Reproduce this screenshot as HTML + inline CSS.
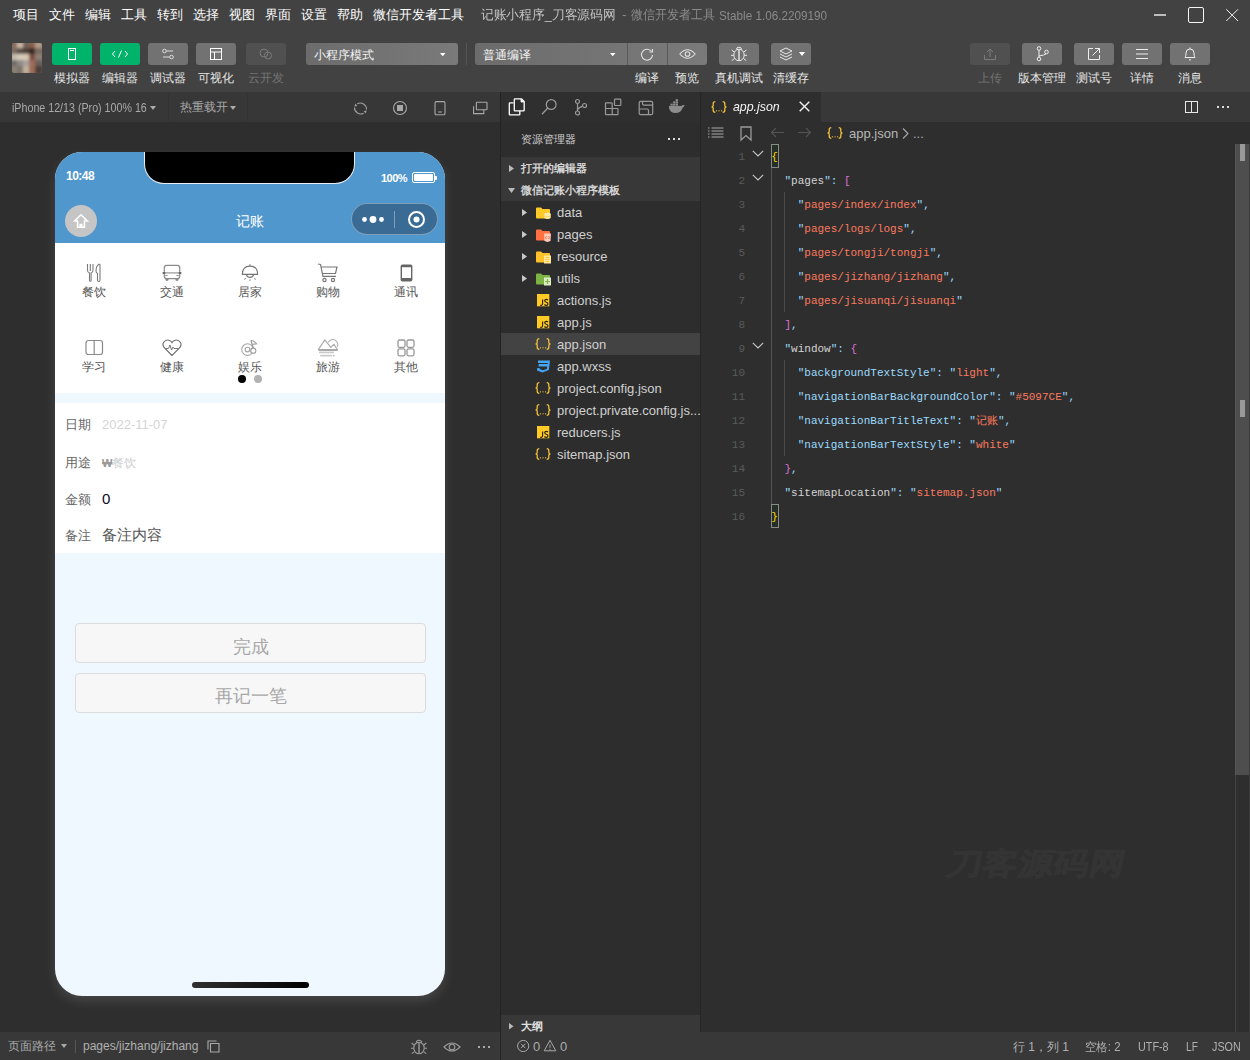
<!DOCTYPE html>
<html><head><meta charset="utf-8">
<style>
*{margin:0;padding:0;box-sizing:border-box}
html,body{width:1250px;height:1060px;overflow:hidden;background:#2e2e2e;font-family:"Liberation Sans",sans-serif}
.a{position:absolute}
.t{position:absolute;white-space:nowrap;line-height:1}
#top{left:0;top:0;width:1250px;height:92px;background:#424242}
.menu{top:8px;font-size:13px;color:#fff;margin-left:0.5px}
.btn{top:43px;width:40px;height:22px;border-radius:3px;background:#727272}
.btn.g{background:#00b26a}
.btn.d{background:#505050}
.lbl{top:72px;font-size:12px;color:#e6e6e6;text-align:center;width:60px}
svg{position:absolute;overflow:visible}
.gl{font-size:12px;color:#555;width:78px;text-align:center}
.tr{font-size:13px;color:#d0d0d0}
.ln{font-family:"Liberation Mono",monospace;font-size:11px;color:#5a5a5a;width:45px;left:700px;text-align:right}
.code{font-family:"Liberation Mono",monospace;font-size:11px}
.fl{font-size:13px;color:#666}
</style></head><body>
<div id="top" class="a"></div>
<!-- menu -->
<div class="t menu" style="left:12px">项目</div>
<div class="t menu" style="left:48px">文件</div>
<div class="t menu" style="left:84px">编辑</div>
<div class="t menu" style="left:120px">工具</div>
<div class="t menu" style="left:156px">转到</div>
<div class="t menu" style="left:192px">选择</div>
<div class="t menu" style="left:228px">视图</div>
<div class="t menu" style="left:264px">界面</div>
<div class="t menu" style="left:300px">设置</div>
<div class="t menu" style="left:336px">帮助</div>
<div class="t menu" style="left:372px">微信开发者工具</div>
<div class="t" style="left:481px;top:8px;font-size:13px;color:#c4c4c4;transform:scaleX(0.98);transform-origin:0 0">记账小程序_刀客源码网</div>
<div class="t" style="left:622px;top:8px;font-size:13px;color:#8a8a8a">-</div>
<div class="t" style="left:631px;top:8px;font-size:13px;color:#8a8a8a;transform:scaleX(0.925);transform-origin:0 0">微信开发者工具</div>
<div class="t" style="left:719px;top:9px;font-size:13px;color:#8a8a8a;transform:scaleX(0.9);transform-origin:0 0" id="stb">Stable 1.06.2209190</div>

<!-- toolbar -->
<svg style="left:12px;top:43px" width="30" height="30"><defs><filter id="bl" x="-10%" y="-10%" width="120%" height="120%"><feGaussianBlur stdDeviation="1.6"/></filter><clipPath id="cp"><rect width="30" height="30" rx="2"/></clipPath></defs><g clip-path="url(#cp)"><rect width="30" height="30" fill="#7d6e64"/><g filter="url(#bl)"><rect x="-1" y="-1" width="8" height="8" fill="#8a6d5e"/><rect x="5" y="-1" width="8" height="8" fill="#c9b8a5"/><rect x="11" y="-1" width="8" height="8" fill="#6e6158"/><rect x="17" y="-1" width="8" height="8" fill="#8a5f4c"/><rect x="23" y="-1" width="8" height="8" fill="#b29a88"/><rect x="-1" y="5" width="8" height="8" fill="#7a6a60"/><rect x="5" y="5" width="8" height="8" fill="#584d45"/><rect x="11" y="5" width="8" height="8" fill="#4d4038"/><rect x="17" y="5" width="8" height="8" fill="#3a2520"/><rect x="23" y="5" width="8" height="8" fill="#7a6a60"/><rect x="-1" y="11" width="8" height="8" fill="#c6bcae"/><rect x="5" y="11" width="8" height="8" fill="#d6ccbc"/><rect x="11" y="11" width="8" height="8" fill="#d8cab4"/><rect x="17" y="11" width="8" height="8" fill="#7a4c40"/><rect x="23" y="11" width="8" height="8" fill="#8e7f74"/><rect x="-1" y="17" width="8" height="8" fill="#6f6a68"/><rect x="5" y="17" width="8" height="8" fill="#908886"/><rect x="11" y="17" width="8" height="8" fill="#a8a09b"/><rect x="17" y="17" width="8" height="8" fill="#a26a5a"/><rect x="23" y="17" width="8" height="8" fill="#6a5e58"/><rect x="-1" y="23" width="8" height="8" fill="#8b8070"/><rect x="5" y="23" width="8" height="8" fill="#7a746e"/><rect x="11" y="23" width="8" height="8" fill="#c0b29a"/><rect x="17" y="23" width="8" height="8" fill="#9e6a5a"/><rect x="23" y="23" width="8" height="8" fill="#4a3e38"/></g></g></svg>
<div class="a btn g" style="left:52px"></div>
<svg style="left:68px;top:48px" width="8" height="12"><rect x="0.5" y="0.5" width="7" height="11" fill="none" stroke="#fff" stroke-width="1"/><line x1="2" y1="2.5" x2="6" y2="2.5" stroke="#fff"/></svg>
<div class="a btn g" style="left:100px"></div>
<svg style="left:111px;top:48px" width="18" height="12"><path d="M4 3 L1.5 6 L4 9 M14 3 L16.5 6 L14 9 M10.5 2.5 L7.5 9.5" fill="none" stroke="#fff" stroke-width="1"/></svg>
<div class="a btn" style="left:148px"></div>
<svg style="left:162px;top:48px" width="12" height="12"><circle cx="2.5" cy="3" r="1.8" fill="none" stroke="#ddd"/><line x1="4.5" y1="3" x2="11" y2="3" stroke="#ddd"/><circle cx="9.5" cy="9" r="1.8" fill="none" stroke="#ddd"/><line x1="1" y1="9" x2="7.5" y2="9" stroke="#ddd"/></svg>
<div class="a btn" style="left:196px"></div>
<svg style="left:209px;top:47px" width="14" height="14"><rect x="1.5" y="1.5" width="11" height="11" fill="none" stroke="#fff"/><line x1="1.5" y1="5" x2="12.5" y2="5" stroke="#fff"/><line x1="5.5" y1="5" x2="5.5" y2="12.5" stroke="#fff"/></svg>
<div class="a btn d" style="left:246px"></div>
<svg style="left:258px;top:48px" width="16" height="12"><circle cx="6" cy="5" r="4" fill="none" stroke="#7a7a7a"/><circle cx="10" cy="7.5" r="3.5" fill="none" stroke="#7a7a7a"/></svg>
<div class="t lbl" style="left:42px">模拟器</div>
<div class="t lbl" style="left:90px">编辑器</div>
<div class="t lbl" style="left:138px">调试器</div>
<div class="t lbl" style="left:186px">可视化</div>
<div class="t lbl" style="left:236px;color:#747474">云开发</div>
<div class="a" style="left:306px;top:43px;width:152px;height:22px;border-radius:3px;background:linear-gradient(90deg,#6c6c6c,#7a7a7a)"></div>
<div class="t" style="left:314px;top:49px;font-size:12px;color:#f4f4f4">小程序模式</div>
<svg style="left:440px;top:53px" width="6" height="4"><path d="M0 0 L5.5 0 L2.75 3.2 Z" fill="#fff"/></svg>
<div class="a" style="left:466px;top:43px;width:1px;height:22px;background:#555"></div>
<div class="a" style="left:475px;top:43px;width:232px;height:22px;border-radius:3px;background:linear-gradient(90deg,#6c6c6c,#7a7a7a)"></div>
<div class="a" style="left:627px;top:43px;width:1px;height:22px;background:#5a5a5a"></div>
<div class="a" style="left:667px;top:43px;width:1px;height:22px;background:#5a5a5a"></div>
<div class="t" style="left:483px;top:49px;font-size:12px;color:#f4f4f4">普通编译</div>
<svg style="left:610px;top:53px" width="6" height="4"><path d="M0 0 L5.5 0 L2.75 3.2 Z" fill="#fff"/></svg>
<svg style="left:640px;top:47px" width="14" height="14"><path d="M11.5 4.5 A5.5 5.5 0 1 0 12.5 8" fill="none" stroke="#e0e0e0" stroke-width="1.1"/><path d="M9.5 5 L12.5 5 L12.5 2" fill="none" stroke="#e0e0e0" stroke-width="1.1"/></svg>
<svg style="left:679px;top:48px" width="17" height="12"><path d="M0.8 6 Q8.5 -2.5 16.2 6 Q8.5 14.5 0.8 6 Z" fill="none" stroke="#e0e0e0" stroke-width="1.1"/><circle cx="8.5" cy="6" r="2.3" fill="none" stroke="#e0e0e0" stroke-width="1.1"/></svg>
<div class="a btn" style="left:719px"></div>
<svg style="left:730px;top:46px" width="18" height="16"><ellipse cx="9" cy="9" rx="5.2" ry="5.8" fill="none" stroke="#ececec" stroke-width="1.0"/><path d="M6.3 3.6 Q6.5 1.2 9 1.2 Q11.5 1.2 11.7 3.6" fill="none" stroke="#ececec" stroke-width="1.0"/><line x1="9" y1="3.4" x2="9" y2="14.6" stroke="#ececec" stroke-width="1.4"/><path d="M4.2 6 L1.6 4 M3.8 9.3 L1 9.3 M4.4 12.6 L1.8 14.6 M13.8 6 L16.4 4 M14.2 9.3 L17 9.3 M13.6 12.6 L16.2 14.6" stroke="#ececec" stroke-width="1.0"/></svg>
<div class="a btn" style="left:771px"></div>
<svg style="left:779px;top:47px" width="14" height="14"><path d="M7 1 L13 4 L7 7 L1 4 Z" fill="none" stroke="#e8e8e8"/><path d="M1 7 L7 10 L13 7 M1 10 L7 13 L13 10" fill="none" stroke="#e8e8e8"/></svg>
<svg style="left:799px;top:52px" width="6" height="4"><path d="M0 0 L6 0 L3 4 Z" fill="#fff"/></svg>
<div class="t lbl" style="left:617px">编译</div>
<div class="t lbl" style="left:657px">预览</div>
<div class="t lbl" style="left:709px">真机调试</div>
<div class="t lbl" style="left:761px">清缓存</div>
<!-- right toolbar -->
<div class="a btn d" style="left:970px"></div>
<svg style="left:983px;top:47px" width="14" height="14"><path d="M7 10 L7 2 M4 5 L7 2 L10 5 M1.5 8 L1.5 12.5 L12.5 12.5 L12.5 8" fill="none" stroke="#7a7a7a"/></svg>
<div class="a btn" style="left:1022px"></div>
<svg style="left:1036px;top:46px" width="14" height="16"><circle cx="3" cy="2.5" r="1.8" fill="none" stroke="#eee"/><circle cx="3" cy="13" r="1.8" fill="none" stroke="#eee"/><circle cx="10.5" cy="6" r="1.8" fill="none" stroke="#eee"/><path d="M3 4.3 L3 11.2 M3 10 Q9 9 10 7.8" fill="none" stroke="#eee"/></svg>
<div class="a btn" style="left:1074px"></div>
<svg style="left:1087px;top:47px" width="14" height="14"><path d="M6 1.5 L1.5 1.5 L1.5 12.5 L12.5 12.5 L12.5 8 M8 1.5 L12.5 1.5 L12.5 6 M12.5 1.5 L5.5 8.5" fill="none" stroke="#eee"/></svg>
<div class="a btn" style="left:1122px"></div>
<svg style="left:1135px;top:48px" width="14" height="12"><path d="M1 1.5 H13 M1 6 H13 M1 10.5 H13" stroke="#eee"/></svg>
<div class="a btn" style="left:1170px"></div>
<svg style="left:1183px;top:46px" width="14" height="16"><path d="M2 11.5 L2.5 10.5 Q3 9.5 3 7 Q3 3 7 3 Q11 3 11 7 Q11 9.5 11.5 10.5 L12 11.5 Z M6 13.5 Q7 14.8 8 13.5 M7 1.5 L7 3" fill="none" stroke="#eee"/></svg>
<div class="t lbl" style="left:960px;color:#747474">上传</div>
<div class="t lbl" style="left:1012px">版本管理</div>
<div class="t lbl" style="left:1064px">测试号</div>
<div class="t lbl" style="left:1112px">详情</div>
<div class="t lbl" style="left:1160px">消息</div>
<!-- window controls -->
<div class="a" style="left:1154px;top:14px;width:12px;height:2px;background:#bdbdbd"></div>
<div class="a" style="left:1188px;top:7px;width:16px;height:16px;border:1px solid #f4f4f4;border-radius:2px"></div>
<svg style="left:1226px;top:9px" width="13" height="13"><path d="M0.3 0.3 L12 12 M12 0.3 L0.3 12" stroke="#f0f0f0" stroke-width="1"/></svg>

<!-- panels -->
<div class="a" style="left:0;top:92px;width:500px;height:30px;background:#373737"></div>
<div class="a" style="left:500px;top:92px;width:1px;height:968px;background:#232323"></div>
<div class="a" style="left:501px;top:92px;width:199px;height:940px;background:#2d2d2d"></div>
<div class="a" style="left:700px;top:92px;width:550px;height:30px;background:#383838"></div>
<div class="a" style="left:700px;top:92px;width:1px;height:940px;background:#262626"></div>
<div class="a" style="left:701px;top:92px;width:120px;height:30px;background:#2e2e2e"></div>
<div class="a" style="left:701px;top:122px;width:549px;height:910px;background:#2e2e2e"></div>
<div class="a" style="left:0;top:1032px;width:500px;height:28px;background:#383838"></div>
<div class="a" style="left:501px;top:1032px;width:749px;height:28px;background:#383838"></div>


<!-- sim toolbar -->
<div class="t" style="left:12px;top:102px;font-size:12px;color:#a9a9a9;transform:scaleX(0.89);transform-origin:0 0">iPhone 12/13 (Pro) 100% 16</div>
<svg style="left:150px;top:106px" width="6" height="4"><path d="M0 0 L6 0 L3 4 Z" fill="#aaa"/></svg>
<div class="a" style="left:168px;top:92px;width:1px;height:30px;background:#333"></div>
<div class="t" style="left:180px;top:101px;font-size:12px;color:#a9a9a9">热重载</div><div class="t" style="left:216px;top:101px;font-size:12px;color:#a9a9a9">开</div>
<svg style="left:230px;top:106px" width="6" height="4"><path d="M0 0 L6 0 L3 4 Z" fill="#aaa"/></svg>
<div class="a" style="left:247px;top:92px;width:1px;height:30px;background:#333"></div>
<svg style="left:353px;top:101px" width="15" height="15"><path d="M4.3 2.8 A6.3 6.3 0 0 1 13.5 8.5" fill="none" stroke="#a0a0a0" stroke-width="1.1"/><path d="M10.7 12.2 A6.3 6.3 0 0 1 1.5 6.5" fill="none" stroke="#a0a0a0" stroke-width="1.1"/><path d="M1.3 5.5 L2.5 2.5 L4.3 5" fill="#a0a0a0"/><path d="M13.7 9.5 L12.5 12.5 L10.7 10" fill="#a0a0a0"/></svg>
<svg style="left:393px;top:101px" width="15" height="15"><circle cx="7" cy="7" r="6.5" fill="none" stroke="#a8a8a8" stroke-width="1.1"/><rect x="4" y="4" width="6" height="6" fill="#a8a8a8"/></svg>
<svg style="left:434px;top:101px" width="12" height="15"><rect x="1" y="0.6" width="10" height="13.2" rx="1.3" fill="none" stroke="#a8a8a8" stroke-width="1.1"/><line x1="4.2" y1="11" x2="7.8" y2="11" stroke="#a8a8a8" stroke-width="1.1"/></svg>
<svg style="left:473px;top:101px" width="16" height="14"><rect x="3.4" y="1.2" width="10.6" height="7.6" rx="0.5" fill="none" stroke="#a8a8a8" stroke-width="1.1"/><path d="M0.6 5.3 L0.6 12.6 L10.8 12.6 L10.8 8.8" fill="none" stroke="#a8a8a8" stroke-width="1.1"/></svg>
<!-- phone -->
<div class="a" style="left:55px;top:152px;width:390px;height:844px;border-radius:27px;background:#f0f8ff;overflow:hidden;box-shadow:0 5px 12px rgba(255,255,255,0.12)">
  <div class="a" style="left:0;top:0;width:390px;height:91px;background:#5097ce"></div>
  <div class="a" style="left:89px;top:-1px;width:211px;height:33px;background:#000;border-radius:0 0 20px 20px;border:1px solid #e8eef4;border-top:none"></div>
  <div class="t" style="left:11px;top:18px;font-size:12px;color:#fff;font-weight:bold;letter-spacing:-0.5px">10:48</div>
  <div class="t" style="left:326px;top:21px;font-size:11px;color:#fff;font-weight:bold;letter-spacing:-0.5px">100%</div>
  <div class="a" style="left:357px;top:20px;width:23px;height:11px;border:1px solid #fff;border-radius:2px;padding:1px"><div style="width:100%;height:100%;background:#fff;border-radius:1px"></div></div>
  <div class="a" style="left:380px;top:24px;width:2px;height:4px;background:#fff;border-radius:0 1px 1px 0"></div>
  <div class="a" style="left:10px;top:53px;width:32px;height:32px;border-radius:16px;background:#c5c5c5"></div>
  <svg style="left:18px;top:61px" width="16" height="16"><path d="M8 1.8 L14.3 8 L11.4 8 L11.4 14.3 L8.8 14.3 L8.8 11.5 L7.2 11.5 L7.2 14.3 L4.6 14.3 L4.6 8 L1.7 8 Z" fill="none" stroke="#fff" stroke-width="1.6" stroke-linejoin="miter"/></svg>
  <div class="t" style="left:181px;top:62px;font-size:14px;color:#fff">记账</div>
  <div class="a" style="left:296px;top:51px;width:87px;height:32px;border-radius:16px;background:#3a6b94;border:1px solid rgba(255,255,255,0.35)"></div>
  <div class="a" style="left:339px;top:59px;width:1px;height:17px;background:rgba(255,255,255,0.35)"></div>
  <svg style="left:305px;top:60px" width="30" height="15"><circle cx="4.5" cy="7.5" r="2.4" fill="#fff"/><circle cx="13" cy="7.5" r="3.4" fill="#fff"/><circle cx="21.5" cy="7.5" r="2.4" fill="#fff"/></svg>
  <svg style="left:351px;top:57px" width="20" height="20"><circle cx="10.5" cy="10.5" r="7.5" fill="none" stroke="#fff" stroke-width="2"/><circle cx="10.5" cy="10.5" r="3" fill="#fff"/></svg>
  <div class="a" style="left:0;top:91px;width:390px;height:150px;background:#fff"></div>
  <div class="a" style="left:0;top:251px;width:390px;height:150px;background:#fff"></div>
  <div class="a" style="left:137px;top:830px;width:117px;height:6px;border-radius:3px;background:linear-gradient(90deg,#303030,#000)"></div>
</div>

<!-- grid -->
<div class="a" style="left:55px;top:243px;width:390px;height:150px">
  <div class="t gl" style="left:0px;top:43px">餐饮</div>
  <div class="t gl" style="left:78px;top:43px">交通</div>
  <div class="t gl" style="left:156px;top:43px">居家</div>
  <div class="t gl" style="left:234px;top:43px">购物</div>
  <div class="t gl" style="left:312px;top:43px">通讯</div>
  <div class="t gl" style="left:0px;top:118px">学习</div>
  <div class="t gl" style="left:78px;top:118px">健康</div>
  <div class="t gl" style="left:156px;top:118px">娱乐</div>
  <div class="t gl" style="left:234px;top:118px">旅游</div>
  <div class="t gl" style="left:312px;top:118px">其他</div>
</div>
<!-- icons row1 -->
<svg style="left:86px;top:263px" width="16" height="19"><path d="M1.5 1 L1.5 7 Q1.5 9.5 3.5 10 L3.5 17.5 Q3.5 18.3 4.3 18.3 Q5.1 18.3 5.1 17.5 L5.1 10 Q7 9.5 7 7 L7 1 M4.3 1 L4.3 8" fill="none" stroke="#7a7a7a" stroke-width="1.1"/><path d="M11.5 10.5 L11.5 17.3 Q11.5 18.5 12.8 18.5 Q14 18.5 14 17.3 L14 2 Q14 1 13 1.3 Q10 3 10 8 Q10 9.8 11.5 10.5 Z" fill="none" stroke="#7a7a7a" stroke-width="1.1"/></svg>
<svg style="left:160px;top:260px" width="24" height="24"><rect x="4.3" y="5.3" width="15.4" height="13.3" rx="2.4" fill="none" stroke="#8a8a8a" stroke-width="1.2"/><path d="M4.3 12.9 H19.7" stroke="#aaa" stroke-width="1.5"/><path d="M3.4 13 H4.5 M19.5 13 H20.6" stroke="#666" stroke-width="2" stroke-linecap="round"/><path d="M4.6 15.6 H7.8 M16.2 15.6 H19.4" stroke="#9a9a9a" stroke-width="1"/><path d="M5.2 18.5 Q5.2 21 7 21 Q8.8 21 8.8 18.5 Z M15.2 18.5 Q15.2 21 17 21 Q18.8 21 18.8 18.5 Z" fill="#8a8a8a"/></svg>
<svg style="left:238px;top:260px" width="24" height="24"><path d="M4.4 14.3 Q4.4 6.1 12 6.1 Q19.6 6.1 19.6 14.3 Z" fill="none" stroke="#747474" stroke-width="1.2"/><path d="M12 4.3 V6.1" stroke="#8a8a8a" stroke-width="1.2"/><path d="M8.3 14.6 Q9.2 17.4 12 17.4 Q14.8 17.4 15.7 14.6" fill="none" stroke="#777" stroke-width="1.1"/><path d="M6.4 19.7 L7.7 18.2 M12 19.3 V20.9 M17.6 19.7 L16.3 18.2" stroke="#999" stroke-width="1.1"/></svg>
<svg style="left:317px;top:263px" width="22" height="20"><path d="M1 1 L3.5 1.5 L6 13.3 L19 13.3" fill="none" stroke="#777" stroke-width="1.2"/><path d="M4 4 L20 4 L18.5 10.5 L5.3 10.5" fill="none" stroke="#777" stroke-width="1.2"/><circle cx="7.5" cy="17" r="1.6" fill="none" stroke="#777" stroke-width="1.2"/><circle cx="16" cy="17" r="1.6" fill="none" stroke="#777" stroke-width="1.2"/></svg>
<svg style="left:400px;top:264px" width="13" height="18"><rect x="1.3" y="1.3" width="10.4" height="15.4" rx="1" fill="none" stroke="#666" stroke-width="1.4"/><line x1="1.3" y1="2.5" x2="11.7" y2="2.5" stroke="#666" stroke-width="1.5"/><line x1="1.3" y1="15" x2="11.7" y2="15" stroke="#666" stroke-width="2"/></svg>
<!-- icons row2 -->
<svg style="left:85px;top:339px" width="19" height="18"><rect x="1" y="1.5" width="16.5" height="14" rx="2.5" fill="none" stroke="#8a8a8a" stroke-width="1.2"/><line x1="9.2" y1="1.5" x2="9.2" y2="16" stroke="#8a8a8a" stroke-width="1.2"/></svg>
<svg style="left:162px;top:339px" width="20" height="18"><path d="M10 16.5 L2.5 9 Q0 6 1.5 3.5 Q3.5 0.5 7 1.2 Q9 1.7 10 3.5 Q11 1.7 13 1.2 Q16.5 0.5 18.5 3.5 Q20 6 17.5 9 Z" fill="none" stroke="#6a6a6a" stroke-width="1.1"/><path d="M3.5 9.5 L6.5 9.5 L8 6 L9.5 11 L11 8 L12 9.5 L16 9.5" fill="none" stroke="#6a6a6a" stroke-width="0.9"/></svg>
<svg style="left:238px;top:336px" width="24" height="24"><circle cx="9.5" cy="13.6" r="5.8" fill="none" stroke="#ababab" stroke-width="1.1"/><circle cx="9.5" cy="13.6" r="2.3" fill="none" stroke="#a5a5a5" stroke-width="1.1"/><path d="M15.3 12 L13 4.6" stroke="#9a9a9a" stroke-width="1.2"/><circle cx="15.3" cy="14.7" r="2.6" fill="#fff" stroke="#9a9a9a" stroke-width="1.1"/><path d="M12.6 4.2 Q16.5 4.6 18.6 7.8 L14.3 8.4" fill="none" stroke="#a0a0a0" stroke-width="1.1"/></svg>
<svg style="left:315px;top:336px" width="26" height="24"><path d="M13 6.6 A4.8 4.8 0 0 1 22.4 10.8" fill="none" stroke="#b0b0b0" stroke-width="1.1"/><path d="M3.3 13.6 L9.8 3.9 L15.8 11.4 L18.8 8.4 L22.5 13.6 Z" fill="none" stroke="#aaaaaa" stroke-width="1.1" stroke-linejoin="round"/><path d="M3.5 14.4 H22.5" stroke="#a8a8a8" stroke-width="1.2"/><path d="M4 16.4 H19" stroke="#c8c8c8" stroke-width="1.6"/><path d="M5.8 19.6 H16.5" stroke="#cccccc" stroke-width="1.7" stroke-linecap="round"/><circle cx="18.8" cy="19.6" r="0.9" fill="#c0c0c0"/></svg>
<svg style="left:397px;top:339px" width="19" height="18"><rect x="1" y="1" width="7" height="7.3" rx="1.5" fill="none" stroke="#999" stroke-width="1.3"/><rect x="10" y="1" width="7" height="7.3" rx="1.5" fill="none" stroke="#999" stroke-width="1.3"/><rect x="1" y="9.8" width="7" height="7" rx="1.5" fill="none" stroke="#999" stroke-width="1.3"/><rect x="10" y="9.8" width="7" height="7" rx="1.5" fill="none" stroke="#999" stroke-width="1.3"/></svg>
<div class="a" style="left:238px;top:375px;width:8px;height:8px;border-radius:4px;background:#000"></div>
<div class="a" style="left:254px;top:375px;width:8px;height:8px;border-radius:4px;background:#b2b2b2"></div>
<!-- form -->
<div class="a" style="left:55px;top:403px;width:390px;height:150px;background:#fff"></div>
<div class="t fl" style="left:65px;top:418px">日期</div>
<div class="t" style="left:102px;top:418px;font-size:13px;color:#d4d4d4">2022-11-07</div>
<div class="t fl" style="left:65px;top:456px">用途</div>
<div class="t" style="left:102px;top:457px;font-size:12px;color:#d0d0d0"><span style="font-size:11px;color:#9a9a9a;font-weight:bold">₩</span>餐饮</div>
<div class="t fl" style="left:65px;top:493px">金额</div>
<div class="t" style="left:102px;top:491px;font-size:15px;color:#0a0a1e">0</div>
<div class="t fl" style="left:65px;top:529px">备注</div>
<div class="t" style="left:102px;top:527px;font-size:15px;color:#555">备注内容</div>
<!-- buttons -->
<div class="a" style="left:75px;top:623px;width:351px;height:40px;border:1px solid #dcdcdc;border-radius:4px;background:#f7f7f7"></div>
<div class="t" style="left:75px;top:638px;width:351px;text-align:center;font-size:18px;color:#a8a8a8">完成</div>
<div class="a" style="left:75px;top:673px;width:351px;height:40px;border:1px solid #dcdcdc;border-radius:4px;background:#f7f7f7"></div>
<div class="t" style="left:75px;top:687px;width:351px;text-align:center;font-size:18px;color:#a8a8a8">再记一笔</div>

<!-- explorer -->
<div class="a" style="left:501px;top:92px;width:199px;height:30px;background:#2f2f2f"></div>
<svg style="left:505px;top:96px" width="24" height="22"><path d="M8.5 6.8 L5 6.8 Q4.3 6.8 4.3 7.5 L4.3 18.2 Q4.3 18.8 5 18.8 L14.2 18.8 Q14.8 18.8 14.8 18.2 L14.8 14.8" fill="none" stroke="#fff" stroke-width="1.3"/><path d="M9.3 3.6 Q9.3 2.9 10 2.9 L16.5 2.9 L19.2 5.6 L19.2 14.2 Q19.2 14.8 18.5 14.8 L10 14.8 Q9.3 14.8 9.3 14.2 Z" fill="none" stroke="#fff" stroke-width="1.3"/><path d="M16 3 L16 6 L19 6" fill="#fff" stroke="#fff" stroke-width="0.8"/></svg>
<svg style="left:540px;top:98px" width="18" height="18"><circle cx="11.2" cy="6.5" r="4.9" fill="none" stroke="#9a9a9a" stroke-width="1.2"/><line x1="7.8" y1="10" x2="2" y2="16.3" stroke="#9a9a9a" stroke-width="1.3"/></svg>
<svg style="left:574px;top:99px" width="14" height="17"><circle cx="3.5" cy="2.5" r="2" fill="none" stroke="#9a9a9a" stroke-width="1.2"/><circle cx="3.5" cy="14" r="2" fill="none" stroke="#9a9a9a" stroke-width="1.2"/><circle cx="10.5" cy="6.5" r="2" fill="none" stroke="#9a9a9a" stroke-width="1.2"/><path d="M3.5 4.5 L3.5 12 M3.5 11.5 Q3.8 8.5 8.6 7.3" fill="none" stroke="#9a9a9a" stroke-width="1.2"/></svg>
<svg style="left:604px;top:98px" width="19" height="18"><path d="M2.2 4.8 L7.5 4.8 Q8.2 4.8 8.2 5.5 L8.2 10.5 L13.3 10.5 Q14 10.5 14 11.2 L14 16 Q14 16.6 13.3 16.6 L2.2 16.6 Q1.5 16.6 1.5 16 L1.5 5.5 Q1.5 4.8 2.2 4.8 Z M1.5 10.5 L8.2 10.5 L8.2 16.6" fill="none" stroke="#9a9a9a" stroke-width="1.2"/><rect x="10.5" y="1.2" width="6.3" height="6.3" rx="0.8" fill="none" stroke="#9a9a9a" stroke-width="1.2"/></svg>
<svg style="left:638px;top:100px" width="16" height="16"><rect x="1.2" y="1.4" width="13.5" height="13.3" rx="1.5" fill="none" stroke="#9a9a9a" stroke-width="1.2"/><path d="M4.5 1.4 L4.5 3.8 Q4.5 5.2 6 5.2 L14.7 5.2 M1.2 9 L9 9 Q10.5 9 10.5 10.5 L10.5 14.7" fill="none" stroke="#9a9a9a" stroke-width="1.2"/></svg>
<svg style="left:668px;top:100px" width="18" height="14"><path d="M1 6 L13.5 6 Q14.5 4.5 16.8 5.5 Q15.5 7.5 14.8 7.5 Q13 13 7.5 13 Q2 13 1 8 Z" fill="#8c8c8c"/><rect x="2.5" y="3.7" width="2.3" height="2" fill="#8c8c8c"/><rect x="5.1" y="3.7" width="2.3" height="2" fill="#8c8c8c"/><rect x="7.7" y="3.7" width="2.3" height="2" fill="#8c8c8c"/><rect x="5.1" y="1.4" width="2.3" height="2" fill="#8c8c8c"/><rect x="7.7" y="1.4" width="2.3" height="2" fill="#8c8c8c"/><rect x="7.7" y="-0.8" width="2.3" height="2" fill="#8c8c8c"/></svg>
<div class="t" style="left:521px;top:134px;font-size:11px;color:#cfcfcf">资源管理器</div>
<div class="a" style="left:668px;top:138px;width:2px;height:2px;background:#ddd"></div>
<div class="a" style="left:673px;top:138px;width:2px;height:2px;background:#ddd"></div>
<div class="a" style="left:678px;top:138px;width:2px;height:2px;background:#ddd"></div>
<div class="a" style="left:501px;top:157px;width:199px;height:44px;background:#383838"></div>
<svg style="left:509px;top:165px" width="5" height="7"><path d="M0 0 L5 3.5 L0 7 Z" fill="#bbb"/></svg>
<svg style="left:508px;top:188px" width="7" height="5"><path d="M0 0 L7 0 L3.5 5 Z" fill="#bbb"/></svg>
<div class="t" style="left:521px;top:163px;font-size:11px;color:#d4d4d4;font-weight:bold">打开的编辑器</div>
<div class="t" style="left:521px;top:185px;font-size:11px;color:#d4d4d4;font-weight:bold">微信记账小程序模板</div>
<div class="a" style="left:501px;top:333px;width:199px;height:22px;background:#434343"></div>
<div class="t tr" style="left:557px;top:206px">data</div>
<svg style="left:522px;top:208px" width="5" height="9"><path d="M0 1 L5 4.5 L0 8 Z" fill="#c8c8c8"/></svg>
<div class="t tr" style="left:557px;top:228px">pages</div>
<svg style="left:522px;top:230px" width="5" height="9"><path d="M0 1 L5 4.5 L0 8 Z" fill="#c8c8c8"/></svg>
<div class="t tr" style="left:557px;top:250px">resource</div>
<svg style="left:522px;top:252px" width="5" height="9"><path d="M0 1 L5 4.5 L0 8 Z" fill="#c8c8c8"/></svg>
<div class="t tr" style="left:557px;top:272px">utils</div>
<svg style="left:522px;top:274px" width="5" height="9"><path d="M0 1 L5 4.5 L0 8 Z" fill="#c8c8c8"/></svg>
<div class="t tr" style="left:557px;top:294px">actions.js</div>
<div class="t tr" style="left:557px;top:316px">app.js</div>
<div class="t tr" style="left:557px;top:338px">app.json</div>
<div class="t tr" style="left:557px;top:360px">app.wxss</div>
<div class="t tr" style="left:557px;top:382px">project.config.json</div>
<div class="t tr" style="left:557px;top:404px">project.private.config.js...</div>
<div class="t tr" style="left:557px;top:426px">reducers.js</div>
<div class="t tr" style="left:557px;top:448px">sitemap.json</div>
<svg style="left:536px;top:207px" width="16" height="13"><path d="M0 1.5 Q0 0.5 1 0.5 L5 0.5 L6.5 2 L13 2 Q14 2 14 3 L14 10.5 Q14 11.5 13 11.5 L1 11.5 Q0 11.5 0 10.5 Z" fill="#ffca28"/><ellipse cx="11.5" cy="7" rx="3.2" ry="1.3" fill="#ffe9a8"/><path d="M8.3 7 L8.3 11 Q11.5 13 14.7 11 L14.7 7" fill="#ffe9a8"/><path d="M8.3 9 Q11.5 10.5 14.7 9" stroke="#ffca28" stroke-width="0.6" fill="none"/></svg>
<svg style="left:536px;top:229px" width="16" height="13"><path d="M0 1.5 Q0 0.5 1 0.5 L5 0.5 L6.5 2 L13 2 Q14 2 14 3 L14 10.5 Q14 11.5 13 11.5 L1 11.5 Q0 11.5 0 10.5 Z" fill="#ff7043"/><path d="M8 4.5 L15 4.5 L14.5 12 L11.5 13 L8.5 12 Z" fill="#ffccbc"/><path d="M10.5 7 L9.5 8.5 L10.5 10 M12.5 7 L13.5 8.5 L12.5 10" stroke="#ff5a36" stroke-width="0.8" fill="none"/></svg>
<svg style="left:536px;top:251px" width="16" height="13"><path d="M0 1.5 Q0 0.5 1 0.5 L5 0.5 L6.5 2 L13 2 Q14 2 14 3 L14 10.5 Q14 11.5 13 11.5 L1 11.5 Q0 11.5 0 10.5 Z" fill="#ffc12a"/><rect x="8" y="4.5" width="7" height="8" fill="#ffe7a0"/><path d="M9.5 6.5 H13.5 M9.5 8.5 H13.5 M9.5 10.5 H13.5" stroke="#ffc12a" stroke-width="0.8"/></svg>
<svg style="left:536px;top:273px" width="16" height="13"><path d="M0 1.5 Q0 0.5 1 0.5 L5 0.5 L6.5 2 L13 2 Q14 2 14 3 L14 10.5 Q14 11.5 13 11.5 L1 11.5 Q0 11.5 0 10.5 Z" fill="#7cb342"/><rect x="8" y="4.5" width="7" height="8" fill="#dcedc8"/><path d="M11.5 6 V11 M9 8.5 H14" stroke="#7cb342" stroke-width="1.2"/></svg>
<svg style="left:537px;top:294px" width="13" height="13"><rect x="0" y="0" width="12.3" height="12.3" fill="#ffc926"/><path d="M5.6 5.5 L5.6 9.8 Q5.6 11.3 4.2 11.3 L3.3 11.3" fill="none" stroke="#2b2615" stroke-width="1.15"/><path d="M11 6.1 Q10.4 5.4 9.4 5.4 Q7.7 5.4 7.7 6.8 Q7.7 8 9.3 8.3 Q11 8.7 11 9.9 Q11 11.3 9.3 11.3 Q8.1 11.3 7.4 10.5" fill="none" stroke="#2b2615" stroke-width="1.15"/></svg>
<svg style="left:537px;top:316px" width="13" height="13"><rect x="0" y="0" width="12.3" height="12.3" fill="#ffc926"/><path d="M5.6 5.5 L5.6 9.8 Q5.6 11.3 4.2 11.3 L3.3 11.3" fill="none" stroke="#2b2615" stroke-width="1.15"/><path d="M11 6.1 Q10.4 5.4 9.4 5.4 Q7.7 5.4 7.7 6.8 Q7.7 8 9.3 8.3 Q11 8.7 11 9.9 Q11 11.3 9.3 11.3 Q8.1 11.3 7.4 10.5" fill="none" stroke="#2b2615" stroke-width="1.15"/></svg>
<svg style="left:537px;top:426px" width="13" height="13"><rect x="0" y="0" width="12.3" height="12.3" fill="#ffc926"/><path d="M5.6 5.5 L5.6 9.8 Q5.6 11.3 4.2 11.3 L3.3 11.3" fill="none" stroke="#2b2615" stroke-width="1.15"/><path d="M11 6.1 Q10.4 5.4 9.4 5.4 Q7.7 5.4 7.7 6.8 Q7.7 8 9.3 8.3 Q11 8.7 11 9.9 Q11 11.3 9.3 11.3 Q8.1 11.3 7.4 10.5" fill="none" stroke="#2b2615" stroke-width="1.15"/></svg>
<svg style="left:535px;top:338px" width="16" height="12"><path d="M4.3 0.7 Q2.2 0.7 2.2 2.7 L2.2 4.6 Q2.2 6 0.6 6 Q2.2 6 2.2 7.4 L2.2 9.3 Q2.2 11.3 4.3 11.3 M11.7 0.7 Q13.8 0.7 13.8 2.7 L13.8 4.6 Q13.8 6 15.4 6 Q13.8 6 13.8 7.4 L13.8 9.3 Q13.8 11.3 11.7 11.3" fill="none" stroke="#f1bf3a" stroke-width="1.3"/><rect x="4.9" y="9.2" width="1" height="1.2" fill="#f1bf3a"/><rect x="7.5" y="9.2" width="1" height="1.2" fill="#f1bf3a"/><rect x="10.1" y="9.2" width="1" height="1.2" fill="#f1bf3a"/></svg>
<svg style="left:535px;top:382px" width="16" height="12"><path d="M4.3 0.7 Q2.2 0.7 2.2 2.7 L2.2 4.6 Q2.2 6 0.6 6 Q2.2 6 2.2 7.4 L2.2 9.3 Q2.2 11.3 4.3 11.3 M11.7 0.7 Q13.8 0.7 13.8 2.7 L13.8 4.6 Q13.8 6 15.4 6 Q13.8 6 13.8 7.4 L13.8 9.3 Q13.8 11.3 11.7 11.3" fill="none" stroke="#f1bf3a" stroke-width="1.3"/><rect x="4.9" y="9.2" width="1" height="1.2" fill="#f1bf3a"/><rect x="7.5" y="9.2" width="1" height="1.2" fill="#f1bf3a"/><rect x="10.1" y="9.2" width="1" height="1.2" fill="#f1bf3a"/></svg>
<svg style="left:535px;top:404px" width="16" height="12"><path d="M4.3 0.7 Q2.2 0.7 2.2 2.7 L2.2 4.6 Q2.2 6 0.6 6 Q2.2 6 2.2 7.4 L2.2 9.3 Q2.2 11.3 4.3 11.3 M11.7 0.7 Q13.8 0.7 13.8 2.7 L13.8 4.6 Q13.8 6 15.4 6 Q13.8 6 13.8 7.4 L13.8 9.3 Q13.8 11.3 11.7 11.3" fill="none" stroke="#f1bf3a" stroke-width="1.3"/><rect x="4.9" y="9.2" width="1" height="1.2" fill="#f1bf3a"/><rect x="7.5" y="9.2" width="1" height="1.2" fill="#f1bf3a"/><rect x="10.1" y="9.2" width="1" height="1.2" fill="#f1bf3a"/></svg>
<svg style="left:535px;top:448px" width="16" height="12"><path d="M4.3 0.7 Q2.2 0.7 2.2 2.7 L2.2 4.6 Q2.2 6 0.6 6 Q2.2 6 2.2 7.4 L2.2 9.3 Q2.2 11.3 4.3 11.3 M11.7 0.7 Q13.8 0.7 13.8 2.7 L13.8 4.6 Q13.8 6 15.4 6 Q13.8 6 13.8 7.4 L13.8 9.3 Q13.8 11.3 11.7 11.3" fill="none" stroke="#f1bf3a" stroke-width="1.3"/><rect x="4.9" y="9.2" width="1" height="1.2" fill="#f1bf3a"/><rect x="7.5" y="9.2" width="1" height="1.2" fill="#f1bf3a"/><rect x="10.1" y="9.2" width="1" height="1.2" fill="#f1bf3a"/></svg>
<svg style="left:536px;top:360px" width="15" height="13"><path d="M2 0.5 L14 0.5 L12.8 10 L6.5 12.5 L1 10.5 L1.3 8 L3.7 8 L3.6 9 L6.8 10.2 L10.8 9 L11.2 6.5 L2.5 6.5 L2.8 4 L11.6 4 L11.9 3 L2 3 Z" fill="#42a5f5"/></svg>

<div class="a" style="left:501px;top:1015px;width:199px;height:17px;background:#383838"></div>
<svg style="left:509px;top:1023px" width="5" height="7"><path d="M0 0 L4.5 3.2 L0 6.4 Z" fill="#bbb"/></svg>
<div class="t" style="left:521px;top:1021px;font-size:11px;color:#e0e0e0;font-weight:bold">大纲</div>

<!-- editor tab -->
<svg style="left:711px;top:101px" width="16" height="12"><path d="M4.3 0.7 Q2.2 0.7 2.2 2.7 L2.2 4.6 Q2.2 6 0.6 6 Q2.2 6 2.2 7.4 L2.2 9.3 Q2.2 11.3 4.3 11.3 M11.7 0.7 Q13.8 0.7 13.8 2.7 L13.8 4.6 Q13.8 6 15.4 6 Q13.8 6 13.8 7.4 L13.8 9.3 Q13.8 11.3 11.7 11.3" fill="none" stroke="#f1bf3a" stroke-width="1.3"/><rect x="4.9" y="9.2" width="1" height="1.2" fill="#f1bf3a"/><rect x="7.5" y="9.2" width="1" height="1.2" fill="#f1bf3a"/><rect x="10.1" y="9.2" width="1" height="1.2" fill="#f1bf3a"/></svg>
<div class="t" style="left:733px;top:100px;font-size:13px;color:#f4f4f4;font-style:italic;transform:scaleX(0.95);transform-origin:0 0">app.json</div>
<svg style="left:799px;top:101px" width="11" height="11"><path d="M0.7 0.7 L10.3 10.3 M10.3 0.7 L0.7 10.3" stroke="#f0f0f0" stroke-width="1.4"/></svg>
<svg style="left:1185px;top:101px" width="13" height="12"><rect x="0.5" y="0.5" width="12" height="11" fill="none" stroke="#e8e8e8"/><line x1="6.5" y1="0.5" x2="6.5" y2="11.5" stroke="#e8e8e8"/></svg>
<div class="a" style="left:1217px;top:106px;width:2px;height:2px;background:#ddd"></div>
<div class="a" style="left:1222px;top:106px;width:2px;height:2px;background:#ddd"></div>
<div class="a" style="left:1227px;top:106px;width:2px;height:2px;background:#ddd"></div>
<!-- breadcrumb -->
<svg style="left:708px;top:127px" width="16" height="12"><path d="M0 1 H1.5 M0 4 H1.5 M0 7 H1.5 M0 10 H1.5" stroke="#aaa" stroke-width="1"/><path d="M3.5 1 H15.5 M3.5 4 H15.5 M3.5 7 H15.5 M3.5 10 H15.5" stroke="#aaa" stroke-width="1"/></svg>
<svg style="left:740px;top:126px" width="12" height="15"><path d="M1 1 L11 1 L11 14 L6 9.5 L1 14 Z" fill="none" stroke="#9a9a9a" stroke-width="1.3"/></svg>
<svg style="left:770px;top:127px" width="15" height="11"><path d="M14 5.5 H1.5 M6 1 L1.5 5.5 L6 10" fill="none" stroke="#555" stroke-width="1.1"/></svg>
<svg style="left:797px;top:127px" width="15" height="11"><path d="M1 5.5 H13.5 M9 1 L13.5 5.5 L9 10" fill="none" stroke="#555" stroke-width="1.1"/></svg>
<svg style="left:827px;top:127px" width="16" height="12"><path d="M4.3 0.7 Q2.2 0.7 2.2 2.7 L2.2 4.6 Q2.2 6 0.6 6 Q2.2 6 2.2 7.4 L2.2 9.3 Q2.2 11.3 4.3 11.3 M11.7 0.7 Q13.8 0.7 13.8 2.7 L13.8 4.6 Q13.8 6 15.4 6 Q13.8 6 13.8 7.4 L13.8 9.3 Q13.8 11.3 11.7 11.3" fill="none" stroke="#f1bf3a" stroke-width="1.3"/><rect x="4.9" y="9.2" width="1" height="1.2" fill="#f1bf3a"/><rect x="7.5" y="9.2" width="1" height="1.2" fill="#f1bf3a"/><rect x="10.1" y="9.2" width="1" height="1.2" fill="#f1bf3a"/></svg>
<div class="t" style="left:849px;top:127px;font-size:13px;color:#b8b8b8">app.json</div>
<svg style="left:902px;top:128px" width="7" height="11"><path d="M1 0.5 L6 5.5 L1 10.5" fill="none" stroke="#aaa" stroke-width="1.1"/></svg>
<div class="t" style="left:913px;top:127px;font-size:13px;color:#aaa">...</div>
<!-- code -->
<div class="a" style="left:771px;top:144px;width:8px;height:24px;border:1px solid #8a8a8a;background:#252f25"></div>
<div class="a" style="left:771px;top:168px;width:1px;height:336px;background:#555"></div>
<div class="a" style="left:784px;top:192px;width:1px;height:120px;background:#4a4a4a"></div>
<div class="a" style="left:784px;top:360px;width:1px;height:96px;background:#4a4a4a"></div>
<div class="a" style="left:771px;top:504px;width:8px;height:24px;border:1px solid #8a8a8a;background:#252f25"></div>
<div class="t ln" style="top:152px">1</div>
<div class="t code" style="left:771.3px;top:152px"><span style="color:#ffd700">{</span></div>
<div class="t ln" style="top:176px">2</div>
<div class="t code" style="left:784.5px;top:176px"><span style="color:#9cdcfe">"</span><span style="color:#d4d4d4">pages</span><span style="color:#9cdcfe">"</span><span style="color:#9cdcfe">: </span><span style="color:#da70d6">[</span></div>
<div class="t ln" style="top:200px">3</div>
<div class="t code" style="left:797.7px;top:200px"><span style="color:#9cdcfe">"</span><span style="color:#fa7a5e">pages/index/index</span><span style="color:#9cdcfe">"</span><span style="color:#9cdcfe">,</span></div>
<div class="t ln" style="top:224px">4</div>
<div class="t code" style="left:797.7px;top:224px"><span style="color:#9cdcfe">"</span><span style="color:#fa7a5e">pages/logs/logs</span><span style="color:#9cdcfe">"</span><span style="color:#9cdcfe">,</span></div>
<div class="t ln" style="top:248px">5</div>
<div class="t code" style="left:797.7px;top:248px"><span style="color:#9cdcfe">"</span><span style="color:#fa7a5e">pages/tongji/tongji</span><span style="color:#9cdcfe">"</span><span style="color:#9cdcfe">,</span></div>
<div class="t ln" style="top:272px">6</div>
<div class="t code" style="left:797.7px;top:272px"><span style="color:#9cdcfe">"</span><span style="color:#fa7a5e">pages/jizhang/jizhang</span><span style="color:#9cdcfe">"</span><span style="color:#9cdcfe">,</span></div>
<div class="t ln" style="top:296px">7</div>
<div class="t code" style="left:797.7px;top:296px"><span style="color:#9cdcfe">"</span><span style="color:#fa7a5e">pages/jisuanqi/jisuanqi</span><span style="color:#9cdcfe">"</span></div>
<div class="t ln" style="top:320px">8</div>
<div class="t code" style="left:784.5px;top:320px"><span style="color:#da70d6">]</span><span style="color:#9cdcfe">,</span></div>
<div class="t ln" style="top:344px">9</div>
<div class="t code" style="left:784.5px;top:344px"><span style="color:#9cdcfe">"</span><span style="color:#d4d4d4">window</span><span style="color:#9cdcfe">"</span><span style="color:#9cdcfe">: </span><span style="color:#da70d6">{</span></div>
<div class="t ln" style="top:368px">10</div>
<div class="t code" style="left:797.7px;top:368px"><span style="color:#9cdcfe">"</span><span style="color:#9cdcfe">backgroundTextStyle</span><span style="color:#9cdcfe">"</span><span style="color:#9cdcfe">: </span><span style="color:#9cdcfe">"</span><span style="color:#fa7a5e">light</span><span style="color:#9cdcfe">"</span><span style="color:#9cdcfe">,</span></div>
<div class="t ln" style="top:392px">11</div>
<div class="t code" style="left:797.7px;top:392px"><span style="color:#9cdcfe">"</span><span style="color:#9cdcfe">navigationBarBackgroundColor</span><span style="color:#9cdcfe">"</span><span style="color:#9cdcfe">: </span><span style="color:#9cdcfe">"</span><span style="color:#fa7a5e">#5097CE</span><span style="color:#9cdcfe">"</span><span style="color:#9cdcfe">,</span></div>
<div class="t ln" style="top:416px">12</div>
<div class="t code" style="left:797.7px;top:416px"><span style="color:#9cdcfe">"</span><span style="color:#9cdcfe">navigationBarTitleText</span><span style="color:#9cdcfe">"</span><span style="color:#9cdcfe">: </span><span style="color:#9cdcfe">"</span><span style="color:#fa7a5e">记账</span><span style="color:#9cdcfe">"</span><span style="color:#9cdcfe">,</span></div>
<div class="t ln" style="top:440px">13</div>
<div class="t code" style="left:797.7px;top:440px"><span style="color:#9cdcfe">"</span><span style="color:#9cdcfe">navigationBarTextStyle</span><span style="color:#9cdcfe">"</span><span style="color:#9cdcfe">: </span><span style="color:#9cdcfe">"</span><span style="color:#fa7a5e">white</span><span style="color:#9cdcfe">"</span></div>
<div class="t ln" style="top:464px">14</div>
<div class="t code" style="left:784.5px;top:464px"><span style="color:#da70d6">}</span><span style="color:#9cdcfe">,</span></div>
<div class="t ln" style="top:488px">15</div>
<div class="t code" style="left:784.5px;top:488px"><span style="color:#9cdcfe">"</span><span style="color:#d4d4d4">sitemapLocation</span><span style="color:#9cdcfe">"</span><span style="color:#9cdcfe">: </span><span style="color:#9cdcfe">"</span><span style="color:#fa7a5e">sitemap.json</span><span style="color:#9cdcfe">"</span></div>
<div class="t ln" style="top:512px">16</div>
<div class="t code" style="left:771.3px;top:512px"><span style="color:#ffd700">}</span></div>
<svg style="left:752px;top:150px" width="12" height="7"><path d="M0.8 0.8 L6 6 L11.2 0.8" fill="none" stroke="#c8c8c8" stroke-width="1.1"/></svg>
<svg style="left:752px;top:174px" width="12" height="7"><path d="M0.8 0.8 L6 6 L11.2 0.8" fill="none" stroke="#c8c8c8" stroke-width="1.1"/></svg>
<svg style="left:752px;top:342px" width="12" height="7"><path d="M0.8 0.8 L6 6 L11.2 0.8" fill="none" stroke="#c8c8c8" stroke-width="1.1"/></svg>

<!-- scrollbar -->
<div class="a" style="left:1235px;top:144px;width:14px;height:631px;background:#4e4e4e;border-left:1px solid #565656"></div>
<div class="a" style="left:1240px;top:144px;width:5px;height:17px;background:#999"></div>
<div class="a" style="left:1240px;top:400px;width:5px;height:17px;background:#999"></div>
<div class="a" style="left:1235px;top:775px;width:1px;height:257px;background:#444"></div>
<div class="a" style="left:1249px;top:144px;width:1px;height:888px;background:#3c3c3c"></div>
<!-- watermark -->
<div class="t" style="left:951px;top:848px;font-size:35px;font-weight:900;color:#343434;letter-spacing:0.5px;transform:skewX(-12deg) scaleY(0.86);transform-origin:0 0;-webkit-text-stroke:1.2px #343434">刀客源码网</div>
<!-- status bars -->
<div class="t" style="left:8px;top:1040px;font-size:12px;color:#a8a8a8">页面路径</div>
<svg style="left:61px;top:1044px" width="6" height="4"><path d="M0 0 L6 0 L3 4 Z" fill="#aaa"/></svg>
<div class="a" style="left:75px;top:1040px;width:1px;height:13px;background:#555"></div>
<div class="t" style="left:83px;top:1040px;font-size:12px;color:#b0b0b0">pages/jizhang/jizhang</div>
<svg style="left:207px;top:1040px" width="13" height="13"><path d="M3.5 3.5 L12 3.5 L12 12 L3.5 12 Z M1 9.5 L1 1 L9.5 1" fill="none" stroke="#aaa" stroke-width="1.1"/></svg>
<svg style="left:410px;top:1039px" width="18" height="16"><ellipse cx="9" cy="9" rx="5.2" ry="5.8" fill="none" stroke="#9c9c9c" stroke-width="1.1"/><path d="M6.3 3.6 Q6.5 1.2 9 1.2 Q11.5 1.2 11.7 3.6" fill="none" stroke="#9c9c9c" stroke-width="1.1"/><line x1="9" y1="3.4" x2="9" y2="14.6" stroke="#9c9c9c" stroke-width="1.4"/><path d="M4.2 6 L1.6 4 M3.8 9.3 L1 9.3 M4.4 12.6 L1.8 14.6 M13.8 6 L16.4 4 M14.2 9.3 L17 9.3 M13.6 12.6 L16.2 14.6" stroke="#9c9c9c" stroke-width="1.1"/></svg>
<svg style="left:443px;top:1041px" width="18" height="12"><path d="M1 6 Q9 -2 17 6 Q9 14 1 6 Z" fill="none" stroke="#9c9c9c" stroke-width="1.1"/><circle cx="9" cy="6" r="2.8" fill="none" stroke="#9c9c9c" stroke-width="1.1"/></svg>
<div class="a" style="left:478px;top:1046px;width:2px;height:2px;background:#aaa"></div>
<div class="a" style="left:483px;top:1046px;width:2px;height:2px;background:#aaa"></div>
<div class="a" style="left:488px;top:1046px;width:2px;height:2px;background:#aaa"></div>
<svg style="left:517px;top:1040px" width="13" height="13"><circle cx="6.2" cy="6" r="5.6" fill="none" stroke="#aaa" stroke-width="1"/><path d="M4 3.8 L8.4 8.2 M8.4 3.8 L4 8.2" stroke="#aaa" stroke-width="1"/></svg>
<div class="t" style="left:533px;top:1040px;font-size:13px;color:#aaa">0</div>
<svg style="left:543px;top:1039px" width="14" height="13"><path d="M7 1.3 L12.8 11.8 L1.2 11.8 Z" fill="none" stroke="#aaa" stroke-width="1"/><path d="M7 5.5 V9.2 M7 10 V11" stroke="#aaa" stroke-width="0.9"/></svg>
<div class="t" style="left:560px;top:1040px;font-size:13px;color:#aaa">0</div>
<div class="t" style="left:1013px;top:1041px;font-size:12px;color:#b0b0b0">行 1，列 1</div>
<div class="t" style="left:1085px;top:1041px;font-size:12px;color:#b0b0b0;transform:scaleX(0.95);transform-origin:0 0">空格: 2</div>
<div class="t" style="left:1138px;top:1041px;font-size:12px;color:#b0b0b0;transform:scaleX(0.9);transform-origin:0 0">UTF-8</div>
<div class="t" style="left:1186px;top:1041px;font-size:12px;color:#b0b0b0;transform:scaleX(0.85);transform-origin:0 0">LF</div>
<div class="t" style="left:1212px;top:1041px;font-size:12px;color:#b0b0b0;transform:scaleX(0.9);transform-origin:0 0">JSON</div>
</body></html>
